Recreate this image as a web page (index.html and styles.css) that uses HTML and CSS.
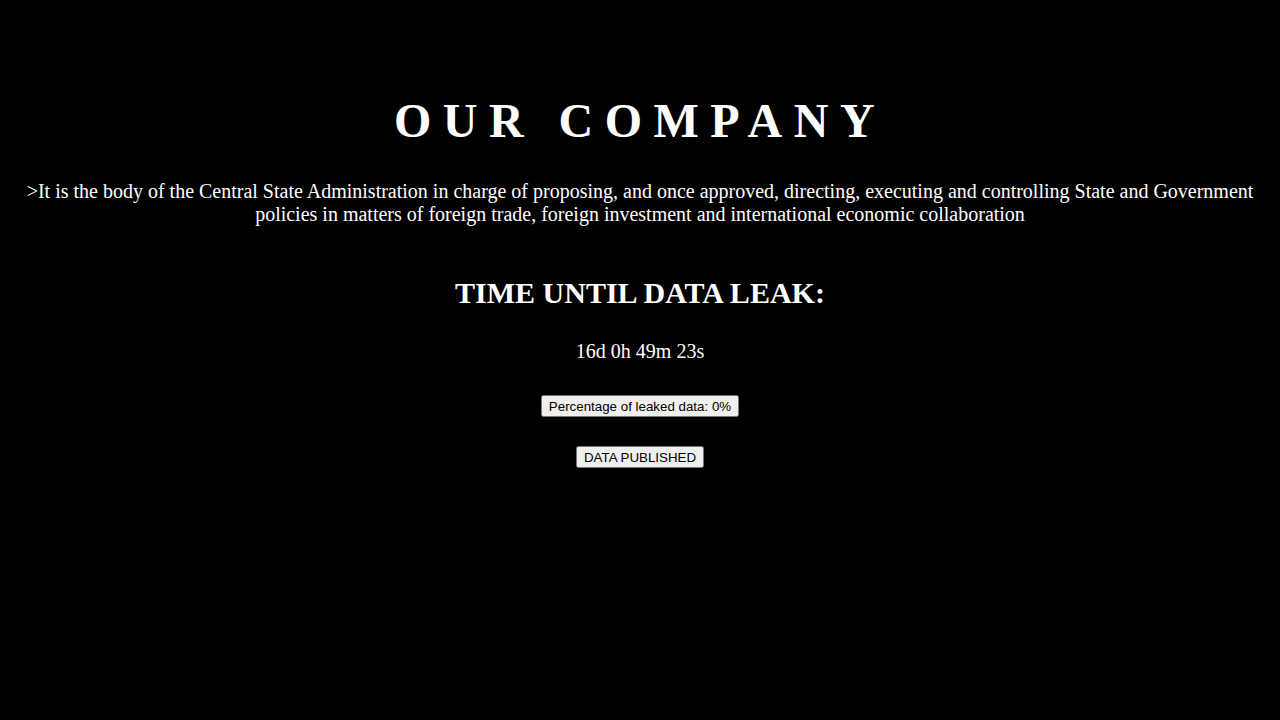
FILE: index.html
```html
<!DOCTYPE html>
<html lang="en">
<head>
<meta charset="utf-8">
<title>Our Company</title>
<link rel="stylesheet" href="styles.css">
</head>
<body>
<main class="page">
  <h1 class="title">OUR COMPANY</h1>
  <p class="intro">&gt;It is the body of the Central State Administration in charge of proposing, and once approved, directing, executing and controlling State and Government policies in matters of foreign trade, foreign investment and international economic collaboration</p>
  <h2 class="timer-title">TIME UNTIL DATA LEAK:</h2>
  <p class="countdown">16d 0h 49m 23s</p>
  <div class="actions">
    <button class="btn" type="button">Percentage of leaked data: 0%</button>
    <button class="btn" type="button">DATA PUBLISHED</button>
  </div>
</main>
</body>
</html>
```
FILE: styles.css
```css
html, body {
  background: #000;
}
body {
  margin: 0;
  color: #fff;
  font-family: "Liberation Serif", "Times New Roman", serif;
}
.page {
  display: flex;
  flex-direction: column;
  align-items: center;
  text-align: center;
  padding: 0 8px;
}
.title {
  font-size: 48px;
  font-weight: bold;
  letter-spacing: 11.5px;
  margin: 93px 0 0;
}
.intro {
  font-size: 20px;
  margin: 32px 0 0;
}
.timer-title {
  font-size: 30px;
  font-weight: bold;
  margin: 50px 0 0;
}
.countdown {
  font-size: 20px;
  margin: 30px 0 0;
}
.actions {
  display: flex;
  flex-direction: column;
  align-items: center;
  gap: 29px;
  margin-top: 32px;
}
.btn {
  font-family: "Liberation Sans", Arial, sans-serif;
  font-size: 13.33px;
  padding: 2px 6px 1px;
}
```
